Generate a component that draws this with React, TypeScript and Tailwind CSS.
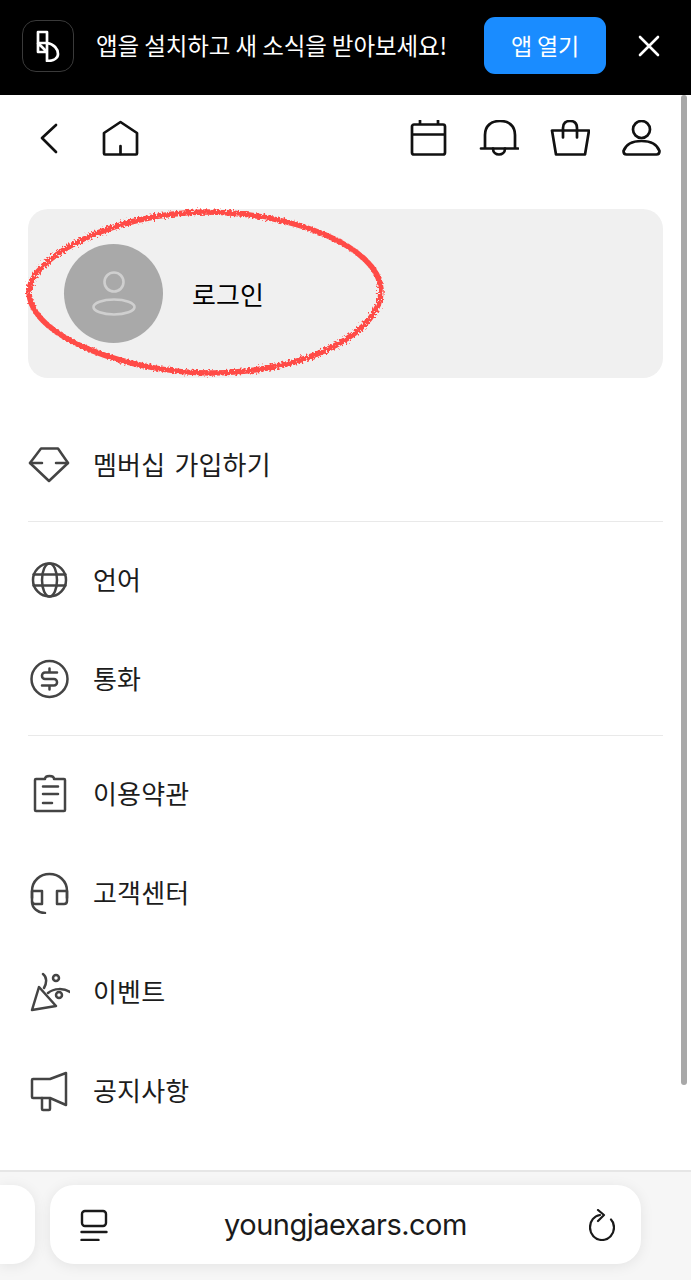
import type { ReactNode } from "react";

const KR = "font-['Noto_Sans_CJK_KR','Noto_Sans',sans-serif]";

function NavIcon({ children }: { children: ReactNode }) {
  return (
    <svg width="40" height="40" viewBox="0 0 40 40" fill="none" stroke="#111" strokeWidth="2.7" strokeLinecap="round" strokeLinejoin="round">
      {children}
    </svg>
  );
}

function RowIcon({ children }: { children: ReactNode }) {
  return (
    <svg width="42" height="42" viewBox="0 0 42 42" fill="none" stroke="#444" strokeWidth="2.5" strokeLinecap="round" strokeLinejoin="round">
      {children}
    </svg>
  );
}

function Row({ icon, label }: { icon: ReactNode; label: string }) {
  return (
    <div className="flex h-[99px] items-center gap-[23px]">
      <div className="flex w-[42px] justify-center">{icon}</div>
      <span className="-translate-y-px text-[26px] leading-none tracking-[0.2px] [word-spacing:3px] text-[#1c1c1c]">{label}</span>
    </div>
  );
}

export default function App() {
  return (
    <div className={`relative flex h-[1280px] w-[691px] flex-col overflow-hidden bg-white ${KR}`}>
      {/* App banner */}
      <div className="flex h-[95px] shrink-0 items-center bg-black pb-[4px] pl-[22px]">
        <div className="flex h-[52px] w-[52px] items-center justify-center rounded-[14px] border border-[#3a3a3a]">
          <svg width="30" height="32" viewBox="0 0 30 32" fill="none" stroke="#fff" strokeWidth="2.7" strokeLinejoin="round">
            <path d="M5 2h9v11H5z" />
            <path d="M5 13v9h9M5 13l9 9" />
            <path d="M14 13c7 1 11 6 11 11 0 4-4 7-11 7z" />
          </svg>
        </div>
        <span className="ml-[22px] w-[388px] text-[23.5px] leading-none tracking-[-0.1px] whitespace-nowrap text-white">
          앱을 설치하고 새 소식을 받아보세요!
        </span>
        <button className="flex h-[57px] w-[122px] items-center justify-center rounded-[11px] bg-[#1a8cff] text-[23px] tracking-[-0.2px] text-white">
          앱 열기
        </button>
        <svg className="ml-[31px]" width="24" height="24" viewBox="0 0 24 24" fill="none" stroke="#fff" strokeWidth="2.6" strokeLinecap="round">
          <path d="M3 3l18 18M21 3L3 21" />
        </svg>
      </div>

      {/* Top nav */}
      <div className="flex h-[89px] shrink-0 items-center justify-between pr-[30px] pl-[28px]">
        <div className="flex items-center gap-[32px]">
          <NavIcon>
            <path d="M28 5L14 18l14 14" />
          </NavIcon>
          <NavIcon>
            <path d="M20.5 2L4 13v20.5a1 1 0 0 0 1 1h31a1 1 0 0 0 1-1V13z" />
            <path d="M20.5 34V26" />
          </NavIcon>
        </div>
        <div className="flex items-center gap-[31px]">
          <NavIcon>
            <path d="M6 4.5h29a2 2 0 0 1 2 2v26a2 2 0 0 1-2 2H6a2 2 0 0 1-2-2v-26a2 2 0 0 1 2-2zM4 14.5h33M12 0.5v4M30 0.5v4" />
          </NavIcon>
          <NavIcon>
            <path d="M6 28.5V15C6 6 12 1 21 1s15 5 15 14v13.5M2 28.5h37" />
            <path d="M14 28.5c0 4 3 6 6 6s6-2 6-6" />
          </NavIcon>
          <NavIcon>
            <path d="M2 10.5h37l-4 24H6z" />
            <path d="M13 17.5V8c0-5 3-7 7-7s7 2 7 7v9.5" />
          </NavIcon>
          <NavIcon>
            <circle cx="20.5" cy="9.5" r="8.5" />
            <path d="M2.5 31C5 24 12 21 20.5 21S36 24 38.5 31c0 2-1 3.5-3 3.5H5.5c-2 0-3-1.5-3-3.5z" />
          </NavIcon>
        </div>
      </div>

      {/* Login card */}
      <div className="relative mx-[28px] mt-[25px] flex h-[169px] shrink-0 items-center rounded-[20px] bg-[#f0f0f0] pl-[36px]">
        <div className="flex h-[99px] w-[99px] items-center justify-center rounded-full bg-[#a9a9a9]">
          <svg width="44" height="46" viewBox="0 0 44 46" fill="none" stroke="#cfcfcf" strokeWidth="2.6">
            <circle cx="22" cy="11" r="9.5" />
            <ellipse cx="22" cy="36" rx="20.5" ry="7.5" />
          </svg>
        </div>
        <span className="ml-[29px] text-[26px] leading-none tracking-[0.1px] text-black">로그인</span>

        {/* hand drawn red circle */}
        <svg className="absolute top-[-12px] left-[-14px]" width="380" height="190" viewBox="0 0 380 190" fill="none">
          <defs>
            <filter id="rough" x="-5%" y="-10%" width="110%" height="120%">
              <feTurbulence type="fractalNoise" baseFrequency="0.5" numOctaves="3" seed="4" />
              <feDisplacementMap in="SourceGraphic" scale="7" />
            </filter>
          </defs>
          <path
            d="M15 94C17 60 100 16 190 15C280 15 364 50 367 92C369 132 300 174 200 176C120 177 15 142 15 94Z"
            stroke="#ff4b47"
            strokeWidth="5.5"
            filter="url(#rough)"
          />
        </svg>
      </div>

      {/* Menu */}
      <div className="mx-[28px] mt-[37px] flex flex-col">
        <Row
          label="멤버십 가입하기"
          icon={
            <RowIcon>
              <path d="M13 4.500h17l10 14.500-19 18L2 19z" />
              <path d="M2 19h12M28 19h12" />
            </RowIcon>
          }
        />
        <div className="mt-[7px] mb-[8px] h-px bg-[#e9e9e9]" />
        <Row
          label="언어"
          icon={
            <RowIcon>
              <circle cx="21.500" cy="21" r="16.500" />
              <ellipse cx="21.500" cy="21" rx="7.500" ry="16.500" />
              <path d="M5.500 15.500h32M5.500 26.500h32" />
            </RowIcon>
          }
        />
        <Row
          label="통화"
          icon={
            <RowIcon>
              <circle cx="21.500" cy="21" r="18" />
              <path d="M29 14.500H17a3 3 0 0 0-3 3v.5a3 3 0 0 0 3 3h9a3 3 0 0 1 3 3v.5a3 3 0 0 1-3 3H14M21.500 10.500v4M21.500 27.500v4" />
            </RowIcon>
          }
        />
        <div className="mt-[7px] mb-[8px] h-px bg-[#e9e9e9]" />
        <Row
          label="이용약관"
          icon={
            <RowIcon>
              <path d="M17 6H8a1 1 0 0 0-1 1v30a1 1 0 0 0 1 1h28a1 1 0 0 0 1-1V7a1 1 0 0 0-1-1H26c0-2-2-3-4.500-3S17 4 17 6z" />
              <path d="M15 13.500h15M15 21h15M15 30h9" />
            </RowIcon>
          }
        />
        <Row
          label="고객센터"
          icon={
            <RowIcon>
              <path d="M4 26v-7C4 9 12 2 21.500 2S39 9 39 19v7" />
              <path d="M4 19h10v13H7c-2 0-3-1-3-3zM39 19H29v13h7c2 0 3-1 3-3z" />
              <path d="M4 30c0 6 6 11 13 11" />
            </RowIcon>
          }
        />
        <Row
          label="이벤트"
          icon={
            <RowIcon>
              <path d="M11 16L4 39l24-4z" />
              <circle cx="28" cy="7" r="3" />
              <circle cx="31" cy="24" r="3" />
              <path d="M15 3c4 3 4 9 1 14M20 22c6-5 16-5 22-1" />
            </RowIcon>
          }
        />
        <Row
          label="공지사항"
          icon={
            <RowIcon>
              <path d="M5 9h17L38 3v32L22 28H5a1 1 0 0 1-1-1V10a1 1 0 0 1 1-1z" />
              <path d="M14 28v11a1 1 0 0 0 1 1h6a1 1 0 0 0 1-1V29" />
            </RowIcon>
          }
        />
      </div>

      {/* Scrollbar */}
      <div className="absolute top-[95px] right-[4px] h-[990px] w-[6px] rounded-full bg-[#a8a8a8]" />

      {/* Browser bar */}
      <div className="absolute bottom-0 left-0 flex h-[110px] w-full gap-[15px] border-t-2 border-[#e6e6e6] bg-[#f6f6f6] pt-[13px]">
        <div className="h-[79px] w-[35px] shrink-0 rounded-r-[22px] bg-white shadow-[0_2px_14px_rgba(0,0,0,0.08)]" />
        <div className="flex h-[79px] w-[591px] shrink-0 items-center justify-between rounded-[24px] bg-white pr-[26px] pl-[30px] shadow-[0_2px_14px_rgba(0,0,0,0.08)]">
          <svg width="28" height="32" viewBox="0 0 28 32" fill="none" stroke="#1a1a1a" strokeWidth="2.4" strokeLinecap="round" strokeLinejoin="round">
            <rect x="2" y="2" width="24" height="15" rx="3" />
            <path d="M1.500 23h25M1.500 31h17" />
          </svg>
          <span className="-translate-x-[3px] font-['Inter',sans-serif] text-[29px] leading-none tracking-[-0.5px] text-[#1a1a1a]">youngjaexars.com</span>
          <svg width="26" height="32" viewBox="0 0 26 32" fill="none" stroke="#1a1a1a" strokeWidth="2.2" strokeLinecap="round" strokeLinejoin="round">
            <path d="M11 6C5 7 1 12 1 18.500C1 25 6 31 13 31s12-6 12-12.500c0-3-1-6-3-8" />
            <path d="M9 1l6 5-6 6" />
          </svg>
        </div>
      </div>
    </div>
  );
}
